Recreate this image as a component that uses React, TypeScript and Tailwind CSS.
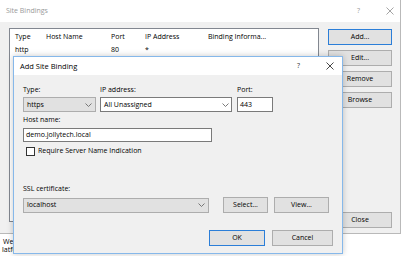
// Site Bindings with the Add Site Binding dialog on top
import React from "react";

function Chevron() {
  return (
    <svg width="7" height="4" viewBox="0 0 7 4" className="shrink-0">
      <path d="M0.5 0.5 L3.5 3.5 L6.5 0.5" fill="none" stroke="#6b6b6b" strokeWidth="0.9" />
    </svg>
  );
}

function CloseGlyph({ color }: { color: string }) {
  return (
    <svg width="8" height="8" viewBox="0 0 8 8">
      <path d="M0.5 0.5 L7.5 7.5 M7.5 0.5 L0.5 7.5" stroke={color} strokeWidth="0.9" />
    </svg>
  );
}

function Btn({ label, w, focused }: { label: string; w: string; focused?: boolean }) {
  return (
    <div
      className={`${w} h-[16px] flex items-center justify-center bg-[#e1e1e1] border ${
        focused ? "border-[#2b7ed8]" : "border-[#adadad]"
      }`}
    >
      {label}
    </div>
  );
}

export default function App() {
  return (
    <div className="relative w-[404px] h-[256px] overflow-hidden bg-white text-black text-[7px] leading-[10px] font-['Open_Sans','Noto_Sans',sans-serif]">
      {/* text of the page behind the windows */}
      <div className="absolute left-[2px] top-[238px] leading-[8px]">
        <div className="pl-[1px]">We</div>
        <div>latfo...</div>
      </div>

      {/* Site Bindings */}
      <div className="absolute left-0 top-0 w-[401px] h-[234px] flex flex-col bg-[#f0f0f0] border-r border-b border-[#b9b9b9]">
        <div className="h-[22px] shrink-0 bg-white flex items-center pl-[6px] text-[#9a9a9a]">
          <span className="flex-1">Site Bindings</span>
          <span className="w-[29px]">?</span>
          <span className="w-[14px]">
            <CloseGlyph color="#9a9a9a" />
          </span>
        </div>
        <div className="flex flex-1 pl-[9px] pt-[6px] pb-[5px]">
          <div className="w-[310px] h-[194px] bg-white border border-[#828790]">
            <div className="grid grid-cols-[31px_65px_34px_63px_1fr] pl-[5px] pt-[2px] h-[14px] items-center">
              <span>Type</span>
              <span>Host Name</span>
              <span>Port</span>
              <span>IP Address</span>
              <span>Binding Informa...</span>
            </div>
            <div className="grid grid-cols-[31px_65px_34px_63px_1fr] pl-[5px] h-[13px] items-center">
              <span>http</span>
              <span></span>
              <span>80</span>
              <span>*</span>
              <span></span>
            </div>
          </div>
          <div className="ml-[9px] mt-[1px] flex flex-col gap-[5px]">
            <Btn label="Add..." w="w-[64px]" focused />
            <Btn label="Edit..." w="w-[64px]" />
            <Btn label="Remove" w="w-[64px]" />
            <Btn label="Browse" w="w-[64px]" />
            <div className="mt-auto">
              <Btn label="Close" w="w-[64px]" />
            </div>
          </div>
        </div>
      </div>

      {/* Add Site Binding */}
      <div className="absolute left-[13px] top-[56px] w-[330px] h-[198px] flex flex-col bg-[#f0f0f0] border border-[#86b8ea] shadow-[0_0_6px_rgba(0,0,0,0.22)]">
        <div className="h-[18px] shrink-0 bg-white flex items-center pl-[6px]">
          <span className="flex-1 text-[7.5px]">Add Site Binding</span>
          <span className="w-[29px] text-[#333]">?</span>
          <span className="w-[16px]">
            <CloseGlyph color="#333" />
          </span>
        </div>

        <div className="flex flex-col pl-[9px] pt-[10px]">
          <div className="flex gap-[4px]">
            <div className="flex flex-col gap-[2px]">
              <span>Type:</span>
              <div className="w-[73px] h-[15px] flex items-center justify-between px-[3px] bg-[#e1e1e1] border border-[#adadad]">
                <span>https</span>
                <Chevron />
              </div>
            </div>
            <div className="flex flex-col gap-[2px]">
              <span>IP address:</span>
              <div className="w-[132px] h-[15px] flex items-center justify-between pl-[3px] pr-[2px] bg-white border border-[#7a7a7a]">
                <span>All Unassigned</span>
                <Chevron />
              </div>
            </div>
            <div className="flex flex-col gap-[2px] ml-[1px]">
              <span>Port:</span>
              <div className="w-[36px] h-[15px] flex items-center px-[2px] bg-white border border-[#7a7a7a]">
                443
              </div>
            </div>
          </div>

          <span className="mt-[3px]">Host name:</span>
          <div className="mt-[3px] w-[189px] h-[14px] flex items-center px-[2px] bg-white border border-[#7a7a7a]">
            demo.jollytech.local
          </div>

          <div className="mt-[4px] flex items-center gap-[3px] pl-[3px]">
            <div className="w-[9px] h-[9px] bg-white border border-[#333]" />
            <span>Require Server Name Indication</span>
          </div>

          <span className="mt-[28px]">SSL certificate:</span>
          <div className="mt-[3px] flex items-center">
            <div className="w-[186px] h-[15px] flex items-center justify-between px-[3px] bg-[#e1e1e1] border border-[#adadad]">
              <span>localhost</span>
              <Chevron />
            </div>
            <div className="ml-[14px]">
              <Btn label="Select..." w="w-[45px]" />
            </div>
            <div className="ml-[6px]">
              <Btn label="View..." w="w-[55px]" />
            </div>
          </div>

          <div className="mt-[17px] flex justify-end pr-[9px] gap-[7px]">
            <Btn label="OK" w="w-[56px]" focused />
            <Btn label="Cancel" w="w-[61px]" />
          </div>
        </div>
      </div>
    </div>
  );
}
